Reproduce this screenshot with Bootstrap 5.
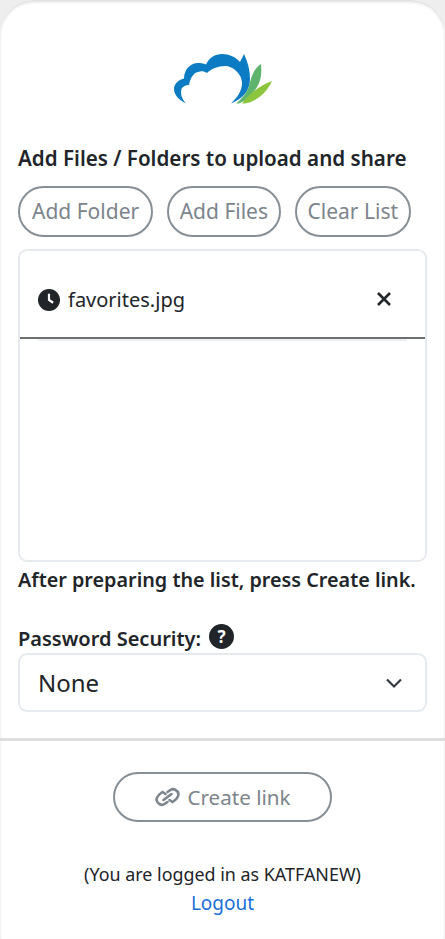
<!DOCTYPE html>
<html lang="en">
<head>
<meta charset="utf-8">
<title>Upload and share</title>
<link href="https://cdn.jsdelivr.net/npm/bootstrap@5.3.0/dist/css/bootstrap.min.css" rel="stylesheet">
<style>
html,body{height:100%;background:#eee;}
body{font-family:"Noto Sans","Open Sans",sans-serif;color:#212529;overflow:hidden;}
.shell{height:939px;background:#fff;border-radius:34px 34px 0 0;box-shadow:inset 0 2px 3px #ddd;display:flex;flex-direction:column;}
.logo-wrap{height:112px;padding-top:54px;}
.top-part{padding:0 18px;}
.heading-text{font-size:20.6px;font-weight:600;line-height:26px;margin:33px 0 0;white-space:nowrap;}
.pill{border:2px solid #868e96;border-radius:26px;color:#7c848c;background:#fff;font-size:21px;height:51px;padding:0 12px;line-height:1;white-space:nowrap;}
.pill-tight{padding:0 11px;}
.pill-row{margin-top:15px;gap:13.500px;}
.list-box{height:313px;margin-top:12px;border:2px solid #e6eaef;border-radius:9px;}
.list-item{height:88px;border-bottom:2px solid #6c7075;padding:12px 33px 0 18px;font-size:20px;}
.list-item svg{flex:none;}
.close-mark{margin-bottom:2px;}
.item-under{height:2px;margin:0 18px;background:#eef0f3;}
.note{font-size:19.8px;font-weight:600;margin:5px 0 0;line-height:26px;white-space:nowrap;}
.pw-label{font-size:20px;font-weight:600;margin-top:33px;line-height:26px;gap:8px;}
.pw-label svg{margin-top:-2.500px;margin-bottom:2.500px;}
.select-fake{height:59px;margin-top:1px;border:2px solid #e6eaef;border-radius:9px;font-size:24px;padding:0 22px 0 18px;color:#212529;}
.rule{height:3px;background:#ddd;margin-top:26px;}
.create{width:219px;height:50px;margin-top:31px;font-size:20.6px;gap:6px;}
.login-line{font-size:17.9px;margin-top:39px;line-height:26px;}
.logout-link{font-size:19px;line-height:28px;margin-top:2px;color:#1a6fd8;text-decoration:none;}
</style>
</head>
<body>
<div class="shell">
  <div class="d-flex justify-content-center logo-wrap">
    <svg width="98" height="50" viewBox="0 0 98 50">
      <path fill="#0b7cc4" d="M12 49.500C5 46 0 41 0 35C0 30 4 26 10 24.500C10 16 16 9 24 9C27 9 30 9.500 32 10.500C35 4 41 0 48 0C55 0 62 3 66 8L70 0C74 8 76 17 76 25C76 36 69 45 57 49.500C63 44 68 37 68 29C68 20 59 12 51 12C44 12 37 15 33 19C30 17 27 17 24 18C19 19 16 25 15 31C11 31 7 33 7 38C7 43 9 46 12 49.500Z"/>
      <path fill="#5fb46d" d="M62 49.500C69 44 73 38 75 32C77 25 79 15 87 10C88 20 87 28 81 36C76 42 71 47 65 49.500Z"/>
      <path fill="#8cc63f" d="M68 49.500C73 42 84 32 98 27C94 36 87 43 79 47C75 49 71 49.500 68 49.500Z"/>
    </svg>
  </div>
  <div class="top-part">
    <p class="heading-text">Add Files / Folders to upload and share</p>
    <div class="d-flex pill-row">
      <button class="btn pill" type="button">Add Folder</button>
      <button class="btn pill pill-tight" type="button">Add Files</button>
      <button class="btn pill pill-tight" type="button">Clear List</button>
    </div>
    <div class="list-box">
      <div class="d-flex align-items-center justify-content-between list-item">
        <span class="d-flex align-items-center gap-2">
          <svg width="22" height="22" viewBox="0 0 16 16"><circle cx="8" cy="8" r="8" fill="#212529"/><path d="M8 3.500V8l3 2" fill="none" stroke="#fff" stroke-width="1.600"/></svg>
          favorites.jpg
        </span>
        <svg class="close-mark" width="16" height="16" viewBox="0 0 16 16"><path d="M2 2l12 12M14 2L2 14" stroke="#212529" stroke-width="2.600"/></svg>
      </div>
      <div class="item-under"></div>
    </div>
    <p class="note">After preparing the list, press Create link.</p>
    <div class="d-flex align-items-center pw-label">Password Security:
      <svg width="25" height="25" viewBox="0 0 25 25"><circle cx="12.500" cy="12.500" r="12.500" fill="#212529"/><text x="12.500" y="18.500" text-anchor="middle" font-size="17" font-weight="700" fill="#fff" font-family="Noto Sans, sans-serif">?</text></svg>
    </div>
    <div class="d-flex align-items-center justify-content-between select-fake">
      <span>None</span>
      <svg width="18" height="12" viewBox="0 0 18 12"><path d="M2 2.500l7 7 7-7" fill="none" stroke="#343a40" stroke-width="2.200"/></svg>
    </div>
  </div>
  <div class="rule"></div>
  <div class="d-flex flex-column align-items-center">
    <button class="btn pill d-flex align-items-center justify-content-center create" type="button">
      <svg width="27" height="22" viewBox="0 0 26 22"><g fill="none" stroke="#7c848c" stroke-width="2.600" stroke-linecap="round"><path d="M11 8L8 6C5 8 2 11 2 14C3 18 7 20 10 18L13 16"/><path d="M15 14L18 16C21 14 24 11 24 8C23 4 19 2 16 4L13 6"/><path d="M9 14L17 8"/></g></svg>
      Create link
    </button>
    <div class="login-line">(You are logged in as KATFANEW)</div>
    <a href="#" class="logout-link">Logout</a>
  </div>
</div>
</body>
</html>
